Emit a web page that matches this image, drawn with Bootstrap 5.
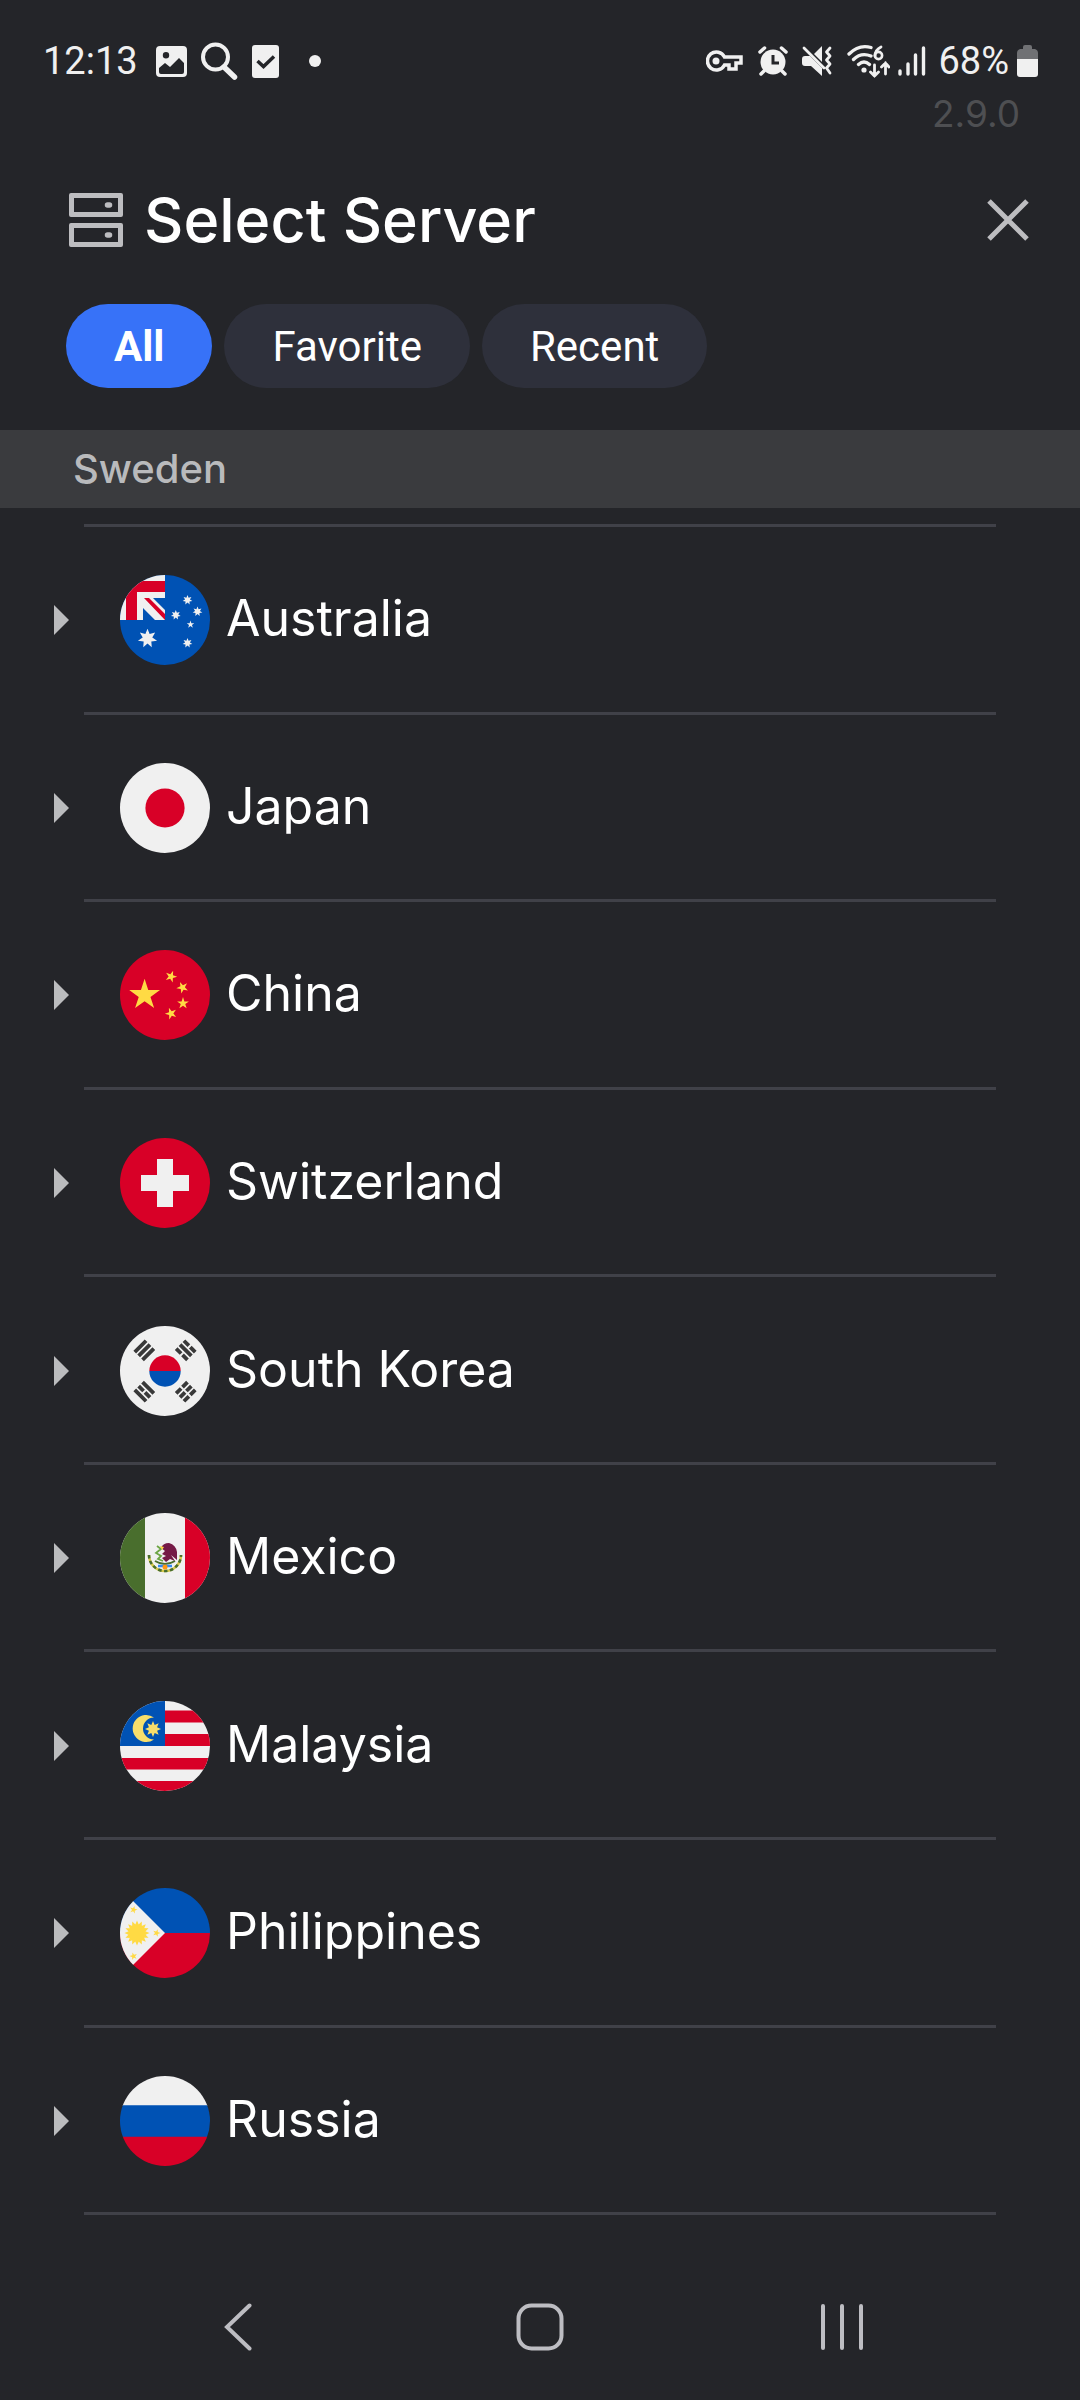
<!DOCTYPE html>
<html lang="en">
<head>
<meta charset="utf-8">
<meta name="viewport" content="width=device-width, initial-scale=1">
<title>Select Server</title>
<link href="https://cdn.jsdelivr.net/npm/bootstrap@5.3.0/dist/css/bootstrap.min.css" rel="stylesheet">
<style>
  body { background: #242529; color: #fff; font-family: Inter, "Liberation Sans", sans-serif; }
  svg { display: block; flex: none; }
  .app-status { height: 92px; padding: 30px 42px 0 43px; font: 400 38px/62px Roboto, sans-serif; color: #f0f0f0; }
  .status-left, .status-right { gap: 14px; }
  .status-signal { gap: 8px; }
  .status-dot { width: 12px; height: 12px; margin-left: 16px; background: #f0f0f0; }
  .app-version { padding-right: 60px; font-size: 37px; line-height: 44px; color: #4e4f52; }
  .app-header { height: 84px; margin-top: 42px; padding: 0 42px 0 69px; color: #bdbdc0; gap: 21px; }
  .app-title { font-size: 61px; line-height: 84px; font-weight: 500; color: #fff; }
  .app-close { color: #bdbdc0; padding: 9px; }
  .filter-tabs { margin-top: 42px; padding: 0 66px; gap: 12px; }
  .filter-tabs .nav-link { height: 84px; padding: 0 48px; border-radius: 42px; background: #2e303b; color: #fff; font: 400 42px/86px Roboto, sans-serif; }
  .filter-tabs .nav-link.active { background: #3772f8; font-weight: 700; }
  .group-band { height: 78px; margin-top: 42px; padding-left: 73px; background: #3a3b3e; color: #b9babc; font-size: 40px; line-height: 78px; font-weight: 500; }
  .server-list { margin: 16px 0 39px; }
  .server-list::before, .server-item::after { content: ""; display: block; height: 3px; margin: 0 84px; background: #404148; flex: none; }
  .server-item { min-height: 150px; flex: 1 1 0; }
  .server-link { color: #fff; padding: 2px 54px 0; font-size: 50px; line-height: 60px; font-weight: 400; }
  .server-link .arrow { margin-right: 51px; }
  .server-link .flag { margin-right: 16px; border-radius: 50%; }
  .server-link span { padding-bottom: 4px; }
  .system-nav { height: 146px; padding: 0 87px; }
  .system-nav button { color: #bdbdc2; }
</style>
</head>
<body>
<svg width="0" height="0" class="position-absolute" aria-hidden="true">
  <defs>
    <polygon id="star5" points="0,-10 2.25,-3.09 9.51,-3.09 3.63,1.18 5.88,8.09 0,3.82 -5.88,8.09 -3.63,1.18 -9.51,-3.09 -2.25,-3.09"/>
    <polygon id="star7" points="0,-10 2.17,-4.5 7.82,-6.23 4.87,-1.11 9.75,2.23 3.91,3.12 4.34,9.01 0,5 -4.34,9.01 -3.91,3.12 -9.75,2.23 -4.87,-1.11 -7.82,-6.23 -2.17,-4.5"/>
    <polygon id="star8" points="0,-10 2.1,-5.1 7.07,-7.07 5.1,-2.1 10,0 5.1,2.1 7.07,7.07 2.1,5.1 0,10 -2.1,5.1 -7.07,7.07 -5.1,2.1 -10,0 -5.1,-2.1 -7.07,-7.07 -2.1,-5.1"/>
    <symbol id="arrow" viewBox="0 0 15 30"><path d="M0 0 15 15 0 30z" fill="#bbbcbe"/></symbol>
  </defs>
</svg>

<div class="d-flex flex-column min-vh-100">
  <div class="app-status d-flex justify-content-between">
    <div class="status-left d-flex align-items-center">
      <span class="me-1">12:13</span>
      <svg width="31" height="31" viewBox="0 0 31 31"><path fill="#f0f0f0" fill-rule="evenodd" d="M4 0H27Q31 0 31 4V27Q31 31 27 31H4Q0 31 0 27V4Q0 0 4 0ZM3 22V26Q3 28 5 28H26Q28 28 28 26V17L23 12 14 21 9 17ZM10 6A3.2 3.2 0 1 0 10 12.400A3.200 3.200 0 1 0 10 6Z"/></svg>
      <svg width="37" height="38" viewBox="0 0 37 38" fill="none" stroke="#f0f0f0"><circle cx="14.500" cy="15" r="12.500" stroke-width="4"/><path d="M23 25 33.500 35" stroke-width="5.500" stroke-linecap="round"/></svg>
      <svg width="27" height="33" viewBox="0 0 27 33"><rect width="27" height="33" rx="3" fill="#f0f0f0"/><path d="M5.500 16 11.500 21.500 22 11.500" fill="none" stroke="#242529" stroke-width="3.500"/></svg>
      <span class="status-dot rounded-circle"></span>
    </div>
    <div class="status-right d-flex align-items-center">
      <svg width="38" height="22" viewBox="0 0 38 22" fill="none" stroke="#f0f0f0" stroke-width="3.500"><path d="M18.500 7A9 9 0 1 0 18.500 15H23V19H30V13H35V7Z"/><circle cx="10" cy="11" r="3.500" fill="#f0f0f0" stroke="none"/></svg>
      <svg width="30" height="30" viewBox="0 0 30 30" fill="none" stroke="#f0f0f0" stroke-width="3.500" stroke-linecap="round"><circle cx="15" cy="16" r="12.500" fill="#f0f0f0" stroke="none"/><path d="M2 6 6.500 2M28 6 23.500 2M6 25 3 28M24 25 27 28"/><path d="M15 9V17H21" stroke="#242529" stroke-width="3" stroke-linecap="butt"/></svg>
      <svg width="31" height="30" viewBox="0 0 31 30"><path fill="#f0f0f0" d="M3 10H8L20 22V30L9 20H3Q0 20 0 17V13Q0 10 3 10ZM12 8 20 0V16Z"/><path d="M2 2 22 22M28 2 24.500 6 28 10 24.500 14 28 18 24.500 22 28 27" fill="none" stroke="#f0f0f0" stroke-width="2.800" stroke-linecap="round" stroke-linejoin="round"/></svg>
      <div class="status-signal d-flex align-items-center">
        <svg width="43" height="34" viewBox="0 0 43 34" fill="none" stroke="#f0f0f0" stroke-width="3.300" stroke-linecap="round"><path d="M2 10Q12 0 24 3.500M6.500 15.500Q14 8 24 12M11.500 20.500Q17 15.500 22.500 20.500"/><circle cx="17" cy="26" r="2.600" fill="#f0f0f0" stroke="none"/><path d="M34 3Q28 6 28 12" stroke-width="2.800"/><circle cx="31.500" cy="11.500" r="3.600" stroke-width="2.600"/><path d="M27.500 21V32M23.500 28 27.500 32 31.500 28M38.500 30V19M34.500 23 38.500 19 42 23" stroke-width="2.800"/></svg>
        <svg width="28" height="30" viewBox="0 0 28 30" stroke="#f0f0f0" stroke-width="3.400" stroke-linecap="round"><path d="M2 25V28M10 18V28M17.500 9V28M25.500 2V28"/></svg>
        <span class="ms-1">68%</span>
        <svg width="21" height="32" viewBox="0 0 21 32"><path d="M6 2Q6 0 8 0H13Q15 0 15 2V4H18Q21 5 21 8V14H0V8Q0 5 3 4H6Z" fill="#707174"/><path d="M0 14H21V29Q21 32 18 32H3Q0 32 0 29Z" fill="#f0f0f0"/></svg>
      </div>
    </div>
  </div>
  <div class="app-version text-end">2.9.0</div>

  <header class="app-header d-flex align-items-center">
    <svg width="54" height="54" viewBox="0 0 54 54"><path fill="currentColor" fill-rule="evenodd" d="M2 0H52Q54 0 54 2V22Q54 24 52 24H2Q0 24 0 22V2Q0 0 2 0ZM5 5V19H49V5ZM2 30H52Q54 30 54 32V52Q54 54 52 54H2Q0 54 0 52V32Q0 30 2 30ZM5 35V49H49V35Z"/><path d="M38.500 12H40.500M38.500 42H40.500" stroke="currentColor" stroke-width="5.500" stroke-linecap="round"/></svg>
    <h1 class="app-title m-0 me-auto">Select Server</h1>
    <button type="button" class="app-close btn border-0" aria-label="Close"><svg width="42" height="42" viewBox="0 0 42 42" stroke="currentColor" stroke-width="5"><path d="M2 2 40 40M40 2 2 40"/></svg></button>
  </header>

  <nav class="filter-tabs nav nav-pills" aria-label="Filter">
    <button type="button" class="nav-link active">All</button>
    <button type="button" class="nav-link">Favorite</button>
    <button type="button" class="nav-link">Recent</button>
  </nav>

  <div class="group-band">Sweden</div>

  <ul class="server-list list-unstyled d-flex flex-column flex-grow-1">
    <li class="server-item d-flex flex-column"><button type="button" class="server-link btn border-0 rounded-0 d-flex align-items-center flex-grow-1">
      <svg class="arrow" width="15" height="30"><use href="#arrow"/></svg>
      <svg class="flag" width="90" height="90" viewBox="0 0 90 90"><path d="M0 0H90V90H0Z" fill="#0052b4"/><path d="M0 0H45V23H33L45 35V45H35L23 33V45H0Z" fill="#f0f0f0"/><path d="M6 45V6H45V17H17V45ZM24 23H29L45 39V45Z" fill="#d80027"/><g fill="#f0f0f0"><use href="#star7" transform="translate(27.500 63.500) scale(.98)"/><use href="#star7" transform="translate(67.500 25) scale(.5)"/><use href="#star7" transform="translate(77.500 36.500) scale(.5)"/><use href="#star7" transform="translate(55.800 40) scale(.5)"/><use href="#star5" transform="translate(70.500 49.500) scale(.4)"/><use href="#star7" transform="translate(67.500 68) scale(.5)"/></g></svg>
      <span>Australia</span></button></li>
    <li class="server-item d-flex flex-column"><button type="button" class="server-link btn border-0 rounded-0 d-flex align-items-center flex-grow-1">
      <svg class="arrow" width="15" height="30"><use href="#arrow"/></svg>
      <svg class="flag" width="90" height="90" viewBox="0 0 90 90"><path d="M0 0H90V90H0Z" fill="#f0f0f0"/><circle cx="45" cy="45" r="19.600" fill="#d80027"/></svg>
      <span>Japan</span></button></li>
    <li class="server-item d-flex flex-column"><button type="button" class="server-link btn border-0 rounded-0 d-flex align-items-center flex-grow-1">
      <svg class="arrow" width="15" height="30"><use href="#arrow"/></svg>
      <svg class="flag" width="90" height="90" viewBox="0 0 90 90"><path d="M0 0H90V90H0Z" fill="#d80027"/><g fill="#ffda44"><use href="#star5" transform="translate(24.600 45) scale(1.620)"/><use href="#star5" transform="translate(51 26.500) rotate(20) scale(.62)"/><use href="#star5" transform="translate(62.500 37.500) rotate(-25) scale(.62)"/><use href="#star5" transform="translate(63 53.300) scale(.62)"/><use href="#star5" transform="translate(51 63.500) rotate(-20) scale(.62)"/></g></svg>
      <span>China</span></button></li>
    <li class="server-item d-flex flex-column"><button type="button" class="server-link btn border-0 rounded-0 d-flex align-items-center flex-grow-1">
      <svg class="arrow" width="15" height="30"><use href="#arrow"/></svg>
      <svg class="flag" width="90" height="90" viewBox="0 0 90 90"><path d="M0 0H90V90H0Z" fill="#d80027"/><path d="M37 21H53V37H69V53H53V69H37V53H21V37H37Z" fill="#f0f0f0"/></svg>
      <span>Switzerland</span></button></li>
    <li class="server-item d-flex flex-column"><button type="button" class="server-link btn border-0 rounded-0 d-flex align-items-center flex-grow-1">
      <svg class="arrow" width="15" height="30"><use href="#arrow"/></svg>
      <svg class="flag" width="90" height="90" viewBox="0 0 90 90"><path d="M0 0H90V90H0Z" fill="#f0f0f0"/><path d="M29.300 45A15.700 15.700 0 0 1 60.700 45Z" fill="#d80027"/><path d="M29.300 45A15.700 15.700 0 0 0 60.700 45Z" fill="#0052b4"/>
        <g stroke="#393939" stroke-width="3.800"><path transform="translate(24.300 24.300) rotate(-45)" d="M-8 -5.500H8M-8 0H8M-8 5.500H8"/><path transform="translate(65.700 24.300) rotate(45)" d="M-8 -5.500H-1M1 -5.500H8M-8 0H8M-8 5.500H-1M1 5.500H8"/><path transform="translate(24.300 65.700) rotate(45)" d="M-8 -5.500H8M-8 0H-1M1 0H8M-8 5.500H8"/><path transform="translate(65.700 65.700) rotate(-45)" d="M-8 -5.500H-1M1 -5.500H8M-8 0H-1M1 0H8M-8 5.500H-1M1 5.500H8"/></g></svg>
      <span>South Korea</span></button></li>
    <li class="server-item d-flex flex-column"><button type="button" class="server-link btn border-0 rounded-0 d-flex align-items-center flex-grow-1">
      <svg class="arrow" width="15" height="30"><use href="#arrow"/></svg>
      <svg class="flag" width="90" height="90" viewBox="0 0 90 90"><path d="M0 0H90V90H0Z" fill="#f0f0f0"/><path d="M0 0H25V90H0Z" fill="#496e2d"/><path d="M65 0H90V90H65Z" fill="#d80027"/>
        <path d="M29 42A16 16 0 0 0 61 42" fill="none" stroke="#d6c84a" stroke-width="2.600"/><path d="M29 42A16 16 0 0 0 61 42" fill="none" stroke="#496e2d" stroke-width="2.600" stroke-dasharray="3.500 2.500"/>
        <path d="M35 48Q45 54 55 48" fill="none" stroke="#496e2d" stroke-width="2"/><path d="M38 53H52" stroke="#338af3" stroke-width="2.500"/><circle cx="45" cy="54" r="2.500" fill="#ff9811"/>
        <path d="M37 33 41 36 36 40 41 43 38 46 43 48" fill="none" stroke="#6da544" stroke-width="1.800"/><path d="M41 35Q43 30 49 30Q56 32 57 39V47L51 42 55 48 50 46 46 49 42 45 46 43 42 41 45 38Z" fill="#751a46"/><path d="M40 33 44 34 42 37Z" fill="#ffda44"/></svg>
      <span>Mexico</span></button></li>
    <li class="server-item d-flex flex-column"><button type="button" class="server-link btn border-0 rounded-0 d-flex align-items-center flex-grow-1">
      <svg class="arrow" width="15" height="30"><use href="#arrow"/></svg>
      <svg class="flag" width="90" height="90" viewBox="0 0 90 90"><path d="M0 0H90V90H0Z" fill="#f0f0f0"/><path d="M45 9.500H90V21.500H45ZM45 33H90V45H45ZM0 57H90V68.500H0ZM0 80H90V90H0Z" fill="#d80027"/><path d="M0 0H45V45H0Z" fill="#0052b4"/><path d="M34 16.500A13.500 13.500 0 1 0 34 38.500A11 11 0 1 1 34 16.500Z" fill="#f7de6b"/><use href="#star8" transform="translate(33 28) scale(.8)" fill="#f7de6b"/></svg>
      <span>Malaysia</span></button></li>
    <li class="server-item d-flex flex-column"><button type="button" class="server-link btn border-0 rounded-0 d-flex align-items-center flex-grow-1">
      <svg class="arrow" width="15" height="30"><use href="#arrow"/></svg>
      <svg class="flag" width="90" height="90" viewBox="0 0 90 90"><path d="M0 0H90V45H0Z" fill="#0052b4"/><path d="M0 45H90V90H0Z" fill="#d80027"/><path d="M0 0 45 45 0 90Z" fill="#f0f0f0"/><g fill="#ffda44"><circle cx="17" cy="45" r="8.500"/><use href="#star8" transform="translate(17 45) scale(1.250)"/><use href="#star8" transform="translate(17 45) rotate(22.500) scale(1.250)"/><use href="#star5" transform="translate(13.500 21.800) rotate(15) scale(.4)"/><use href="#star5" transform="translate(36.500 45) rotate(90) scale(.4)"/><use href="#star5" transform="translate(13.500 68.300) rotate(-15) scale(.4)"/></g></svg>
      <span>Philippines</span></button></li>
    <li class="server-item d-flex flex-column"><button type="button" class="server-link btn border-0 rounded-0 d-flex align-items-center flex-grow-1">
      <svg class="arrow" width="15" height="30"><use href="#arrow"/></svg>
      <svg class="flag" width="90" height="90" viewBox="0 0 90 90"><path d="M0 0H90V30H0Z" fill="#f0f0f0"/><path d="M0 29.300H90V61H0Z" fill="#0052b4"/><path d="M0 60.700H90V90H0Z" fill="#d80027"/></svg>
      <span>Russia</span></button></li>
  </ul>

  <nav class="system-nav d-flex" aria-label="System">
    <button type="button" class="btn border-0 col p-0 d-flex align-items-center justify-content-center" aria-label="Back"><svg width="28" height="48" viewBox="0 0 28 48" fill="none" stroke="currentColor" stroke-width="4" stroke-linecap="round"><path d="M25.500 2.500 3 24 25.500 45.500"/></svg></button>
    <button type="button" class="btn border-0 col p-0 d-flex align-items-center justify-content-center" aria-label="Home"><svg width="48" height="48" viewBox="0 0 48 48" fill="none" stroke="currentColor" stroke-width="4"><rect x="2.500" y="2.500" width="43" height="43" rx="13"/></svg></button>
    <button type="button" class="btn border-0 col p-0 d-flex align-items-center justify-content-center" aria-label="Recents"><svg width="42" height="46" viewBox="0 0 42 46" stroke="currentColor" stroke-width="4" stroke-linecap="round"><path d="M2 2V44M21 2V44M40 2V44"/></svg></button>
  </nav>
</div>
<script src="https://cdn.jsdelivr.net/npm/bootstrap@5.3.0/dist/js/bootstrap.bundle.min.js"></script>
</body>
</html>
